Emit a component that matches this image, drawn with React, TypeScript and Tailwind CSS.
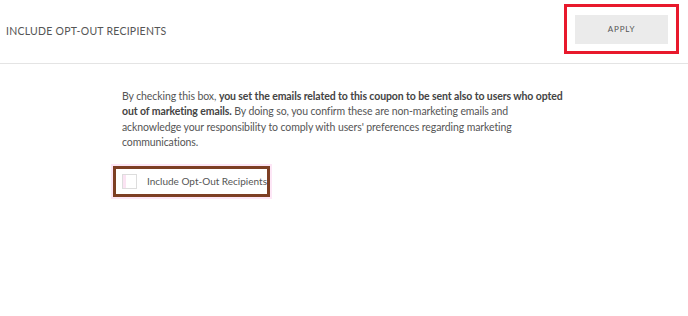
export default function App() {
  return (
    <div className="w-[688px] h-[316px] bg-white font-['Lato',sans-serif] text-[#555]">
      {/* Header */}
      <div className="flex items-start justify-between h-[64px] border-b border-[#e4e4e4] pl-[6px] pr-[9px]">
        <h1 className="mt-[24px] text-[10.5px] tracking-[0.25px] text-[#555] uppercase">Include Opt-Out Recipients</h1>
        <div className="mt-[4px] border-[3px] border-[#e8192c] px-[8px] py-[7px]">
          <button className="w-[93px] h-[29px] bg-[#ebebeb] text-[8px] tracking-[0.8px] text-[#555]">APPLY</button>
        </div>
      </div>

      {/* Body */}
      <div className="pl-[122px] pt-[25px]">
        <p className="w-[460px] text-[10.5px] leading-[15.3px] tracking-[-0.1px] text-[#555]">
          By checking this box,{' '}
          <span className="font-bold text-[#444]">
            you set the emails related to this coupon to be sent also to users who opted
            <br />
            out of marketing emails.
          </span>{' '}
          By doing so, you confirm these are non-marketing emails and
          <br />
          acknowledge your responsibility to comply with users' preferences regarding marketing
          <br />
          communications.
        </p>

        <div className="mt-[14px] -ml-[11px] w-[161px] p-[2px] bg-[#fde6f6]">
          <label className="flex items-center gap-[10px] h-[31px] pl-[6px] border-[3px] border-[#7d3f24] bg-white">
            <span className="shrink-0 w-[15px] h-[15px] border border-[#ddd] bg-white shadow-[inset_3px_0_0_#fbe3f3]" />
            <span className="whitespace-nowrap text-[10px] text-[#555]">Include Opt-Out Recipients</span>
          </label>
        </div>
      </div>
    </div>
  )
}
